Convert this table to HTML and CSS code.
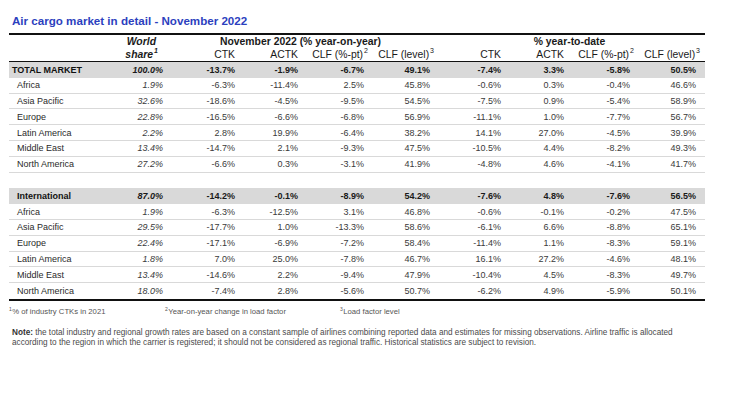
FILE: index.html
```html
<!DOCTYPE html>
<html lang="en">
<head>
<meta charset="utf-8">
<title>Air cargo market in detail - November 2022</title>
<link rel="stylesheet" href="styles.css">
</head>
<body>
<div class="page">
  <h1 class="title">Air cargo market in detail - November 2022</h1>
  <div class="tbl">
    <div class="hrow hrow1">
      <div></div>
      <div class="hshare w">World</div>
      <div class="hgroup">November 2022 (% year-on-year)</div>
      <div class="hgroup">% year-to-date</div>
    </div>
    <div class="hrow hrow2">
      <div></div>
      <div class="hshare">share<sup>1</sup></div>
      <div>CTK</div>
      <div>ACTK</div>
      <div>CLF (%-pt)<sup class="hang">2</sup></div>
      <div>CLF (level)<sup class="hang">3</sup></div>
      <div>CTK</div>
      <div>ACTK</div>
      <div>CLF (%-pt)<sup class="hang">2</sup></div>
      <div>CLF (level)<sup class="hang">3</sup></div>
    </div>

    <div class="row band top"><div class="name">TOTAL MARKET</div><div class="share">100.0%</div><div>-13.7%</div><div>-1.9%</div><div>-6.7%</div><div>49.1%</div><div>-7.4%</div><div>3.3%</div><div>-5.8%</div><div>50.5%</div></div>
    <div class="row"><div class="name">Africa</div><div class="share">1.9%</div><div>-6.3%</div><div>-11.4%</div><div>2.5%</div><div>45.8%</div><div>-0.6%</div><div>0.3%</div><div>-0.4%</div><div>46.6%</div></div>
    <div class="row"><div class="name">Asia Pacific</div><div class="share">32.6%</div><div>-18.6%</div><div>-4.5%</div><div>-9.5%</div><div>54.5%</div><div>-7.5%</div><div>0.9%</div><div>-5.4%</div><div>58.9%</div></div>
    <div class="row"><div class="name">Europe</div><div class="share">22.8%</div><div>-16.5%</div><div>-6.6%</div><div>-6.8%</div><div>56.9%</div><div>-11.1%</div><div>1.0%</div><div>-7.7%</div><div>56.7%</div></div>
    <div class="row"><div class="name">Latin America</div><div class="share">2.2%</div><div>2.8%</div><div>19.9%</div><div>-6.4%</div><div>38.2%</div><div>14.1%</div><div>27.0%</div><div>-4.5%</div><div>39.9%</div></div>
    <div class="row"><div class="name">Middle East</div><div class="share">13.4%</div><div>-14.7%</div><div>2.1%</div><div>-9.3%</div><div>47.5%</div><div>-10.5%</div><div>4.4%</div><div>-8.2%</div><div>49.3%</div></div>
    <div class="row"><div class="name">North America</div><div class="share">27.2%</div><div>-6.6%</div><div>0.3%</div><div>-3.1%</div><div>41.9%</div><div>-4.8%</div><div>4.6%</div><div>-4.1%</div><div>41.7%</div></div>

    <div class="spacer"></div>

    <div class="row band"><div class="name">International</div><div class="share">87.0%</div><div>-14.2%</div><div>-0.1%</div><div>-8.9%</div><div>54.2%</div><div>-7.6%</div><div>4.8%</div><div>-7.6%</div><div>56.5%</div></div>
    <div class="row"><div class="name">Africa</div><div class="share">1.9%</div><div>-6.3%</div><div>-12.5%</div><div>3.1%</div><div>46.8%</div><div>-0.6%</div><div>-0.1%</div><div>-0.2%</div><div>47.5%</div></div>
    <div class="row"><div class="name">Asia Pacific</div><div class="share">29.5%</div><div>-17.7%</div><div>1.0%</div><div>-13.3%</div><div>58.6%</div><div>-6.1%</div><div>6.6%</div><div>-8.8%</div><div>65.1%</div></div>
    <div class="row"><div class="name">Europe</div><div class="share">22.4%</div><div>-17.1%</div><div>-6.9%</div><div>-7.2%</div><div>58.4%</div><div>-11.4%</div><div>1.1%</div><div>-8.3%</div><div>59.1%</div></div>
    <div class="row"><div class="name">Latin America</div><div class="share">1.8%</div><div>7.0%</div><div>25.0%</div><div>-7.8%</div><div>46.7%</div><div>16.1%</div><div>27.2%</div><div>-4.6%</div><div>48.1%</div></div>
    <div class="row"><div class="name">Middle East</div><div class="share">13.4%</div><div>-14.6%</div><div>2.2%</div><div>-9.4%</div><div>47.9%</div><div>-10.4%</div><div>4.5%</div><div>-8.3%</div><div>49.7%</div></div>
    <div class="row last"><div class="name">North America</div><div class="share">18.0%</div><div>-7.4%</div><div>2.8%</div><div>-5.6%</div><div>50.7%</div><div>-6.2%</div><div>4.9%</div><div>-5.9%</div><div>50.1%</div></div>
  </div>

  <div class="foot">
    <span><sup>1</sup>% of industry CTKs in 2021</span>
    <span><sup>2</sup>Year-on-year change in load factor</span>
    <span><sup>3</sup>Load factor level</span>
  </div>

  <p class="note"><b>Note:</b> the total industry and regional growth rates are based on a constant sample of airlines combining reported data and estimates for missing observations. Airline traffic is allocated<br>according to the region in which the carrier is registered; it should not be considered as regional traffic. Historical statistics are subject to revision.</p>
</div>
</body>
</html>
```

FILE: styles.css
```css
html, body {
  margin: 0;
  padding: 0;
  background: #ffffff;
}

body {
  font-family: "Liberation Sans", Arial, sans-serif;
  color: #333333;
}

.page {
  padding: 13px 0 0 9px;
  width: 696px;
}

.title {
  margin: 0 0 4px 3px;
  font-size: 11.6px;
  line-height: 16px;
  font-weight: bold;
  color: #2c3fbe;
}

.tbl {
  border-top: 2px solid #111111;
  border-bottom: 2px solid #111111;
}

.hrow,
.row {
  display: grid;
  grid-template-columns: 91px 67px 72px 63px 66px 66px 71px 63px 66px 71px;
  align-items: center;
}

.hrow {
  height: 13px;
  font-size: 10.4px;
  line-height: 13px;
  color: #1a1a1a;
}

.hrow1 {
  height: 12px;
}

.hrow2 {
  height: 14px;
  border-bottom: 1.5px solid #111111;
}

.hrow > div {
  text-align: right;
  padding-right: 4px;
  white-space: nowrap;
}

.hrow > div:last-child {
  padding-right: 9px;
}

.hrow1 .hgroup {
  grid-column: span 4;
  text-align: center;
  font-weight: bold;
  padding-right: 0;
}

.hrow1 .hgroup:last-child {
  padding-right: 0;
}

.hshare {
  font-weight: bold;
  font-style: italic;
}

.hrow .hshare {
  padding-right: 9px;
}

.hrow1 .w {
  padding-right: 11px;
}

sup {
  font-size: 7px;
  line-height: 0;
  vertical-align: 5px;
  margin-left: 1px;
}

.hang {
  margin-right: -4px;
}

.row {
  height: 15.8px;
  box-sizing: border-box;
  border-bottom: 1px solid #d9d9d9;
  font-size: 9px;
  line-height: 12px;
  color: #3a3a3a;
}

.row > div {
  text-align: right;
  padding-right: 4px;
  white-space: nowrap;
}

.row > div:last-child {
  padding-right: 9px;
}

.row .name {
  text-align: left;
  padding-left: 8px;
  color: #2a2a2a;
}

.row .share {
  font-style: italic;
}

.band {
  background: #d9d9d9;
  border-bottom: none;
  font-weight: bold;
  color: #1a1a1a;
}

.band .name {
  color: #111111;
}

.top .name {
  padding-left: 3px;
}

.row.last {
  border-bottom: none;
}

.spacer {
  height: 15.8px;
}

.foot {
  display: grid;
  grid-template-columns: 156px 175px auto;
  margin-top: 4px;
  height: 13px;
  font-size: 7.7px;
  line-height: 13px;
  color: #555555;
}

.foot sup {
  font-size: 5px;
  vertical-align: 3px;
  margin-left: 0;
  margin-right: 0.5px;
}

.note {
  margin: 10px 0 0 3px;
  font-size: 8.2px;
  line-height: 10.5px;
  color: #4a4a4a;
  white-space: nowrap;
}

.note b {
  color: #333333;
}
```
